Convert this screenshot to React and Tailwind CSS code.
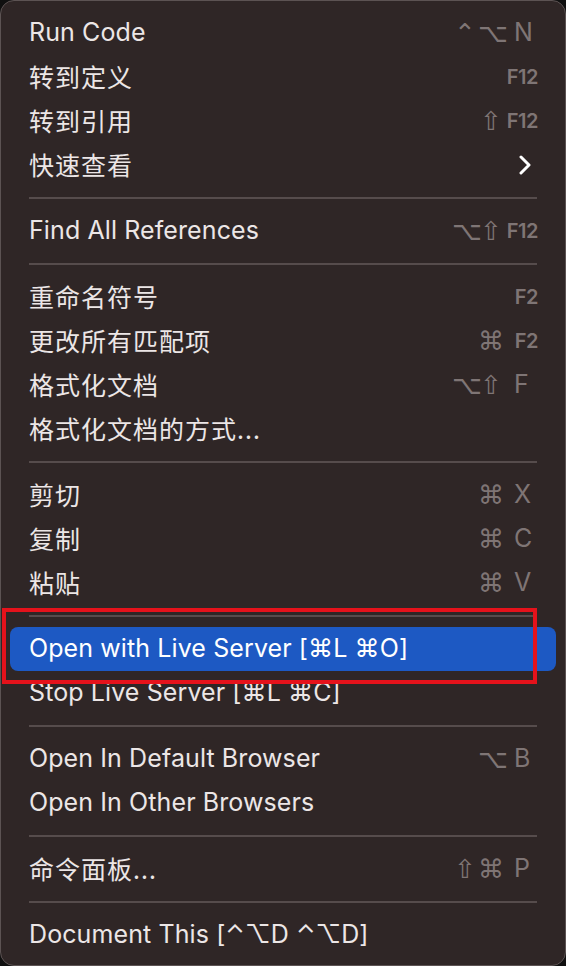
import React from "react";

const latin = "font-['Inter','Noto_Sans_CJK_SC',sans-serif]";

// 菜单项: label, mods (修饰键), key
const groups = [
  [
    { label: "Run Code", mods: ["⌃", "⌥"], key: "N" },
    { label: "转到定义", cjk: true, key: "F12", fkey: true },
    { label: "转到引用", cjk: true, mods: ["⇧"], key: "F12", fkey: true },
    { label: "快速查看", cjk: true, submenu: true },
  ],
  [{ label: "Find All References", mods: ["⌥", "⇧"], key: "F12", fkey: true }],
  [
    { label: "重命名符号", cjk: true, key: "F2", fkey: true },
    { label: "更改所有匹配项", cjk: true, mods: ["⌘"], key: "F2", fkey: true },
    { label: "格式化文档", cjk: true, mods: ["⌥", "⇧"], key: "F" },
    { label: "格式化文档的方式...", cjk: true },
  ],
  [
    { label: "剪切", cjk: true, mods: ["⌘"], key: "X" },
    { label: "复制", cjk: true, mods: ["⌘"], key: "C" },
    { label: "粘贴", cjk: true, mods: ["⌘"], key: "V" },
  ],
  [
    { label: "Open with Live Server [⌘L ⌘O]", active: true },
    { label: "Stop Live Server [⌘L ⌘C]" },
  ],
  [
    { label: "Open In Default Browser", mods: ["⌥"], key: "B" },
    { label: "Open In Other Browsers" },
  ],
  [{ label: "命令面板...", cjk: true, mods: ["⇧", "⌘"], key: "P" }],
  [{ label: "Document This [⌃⌥D ⌃⌥D]" }],
];

function Shortcut({ mods = [], k, fkey }) {
  const slots = mods.length === 1 ? [null, mods[0]] : mods;
  return (
    <div className="mr-[18px] flex items-center text-[#7f7575]">
      <div className="flex">
        {slots.map((m, i) => (
          <span
            key={i}
            className="w-[26px] text-center text-[26px] font-['DejaVu_Sans',sans-serif]"
          >
            {m}
          </span>
        ))}
      </div>
      <span
        className={
          fkey
            ? "w-[34px] text-right text-[20px] font-semibold tracking-[-0.5px]"
            : "w-[34px] pl-[10px] text-[25px]"
        }
      >
        {k}
      </span>
    </div>
  );
}

function Item({ item }) {
  return (
    <div
      className={`flex h-[44px] items-center justify-between rounded-[8px] pl-[19px] ${
        item.active ? "bg-[#1d59c3] text-white" : "text-[#ece6e6]"
      }`}
    >
      <span
        className={
          item.cjk
            ? "text-[25px] tracking-[1px] font-['Noto_Sans_CJK_SC',sans-serif]"
            : "text-[25px] tracking-[0.1px]"
        }
      >
        {item.label}
      </span>
      {item.key && <Shortcut mods={item.mods} k={item.key} fkey={item.fkey} />}
      {item.submenu && (
        <svg width="14" height="20" viewBox="0 0 14 20" className="mr-[24px]">
          <path
            d="M3 2 L11 10 L3 18"
            fill="none"
            stroke="#ffffff"
            strokeWidth="3"
            strokeLinecap="round"
            strokeLinejoin="round"
          />
        </svg>
      )}
    </div>
  );
}

export default function App() {
  return (
    <div className={`relative h-[966px] w-[566px] bg-[#101010] ${latin}`}>
      <div className="h-full rounded-[14px] border border-[#5c5353] bg-[#2f2626] px-[9px] pt-[10px]">
        {groups.map((g, gi) => (
          <div key={gi}>
            {gi > 0 && (
              <div className="flex h-[22px] items-center px-[19px]">
                <div className="h-[2px] w-full bg-[#564c4c]" />
              </div>
            )}
            {g.map((item, ii) => (
              <Item key={ii} item={item} />
            ))}
          </div>
        ))}
      </div>
      {/* 红色标注框 */}
      <div className="absolute left-[2px] top-[608px] h-[76px] w-[535px] border-[4px] border-[#e5121b]" />
    </div>
  );
}
